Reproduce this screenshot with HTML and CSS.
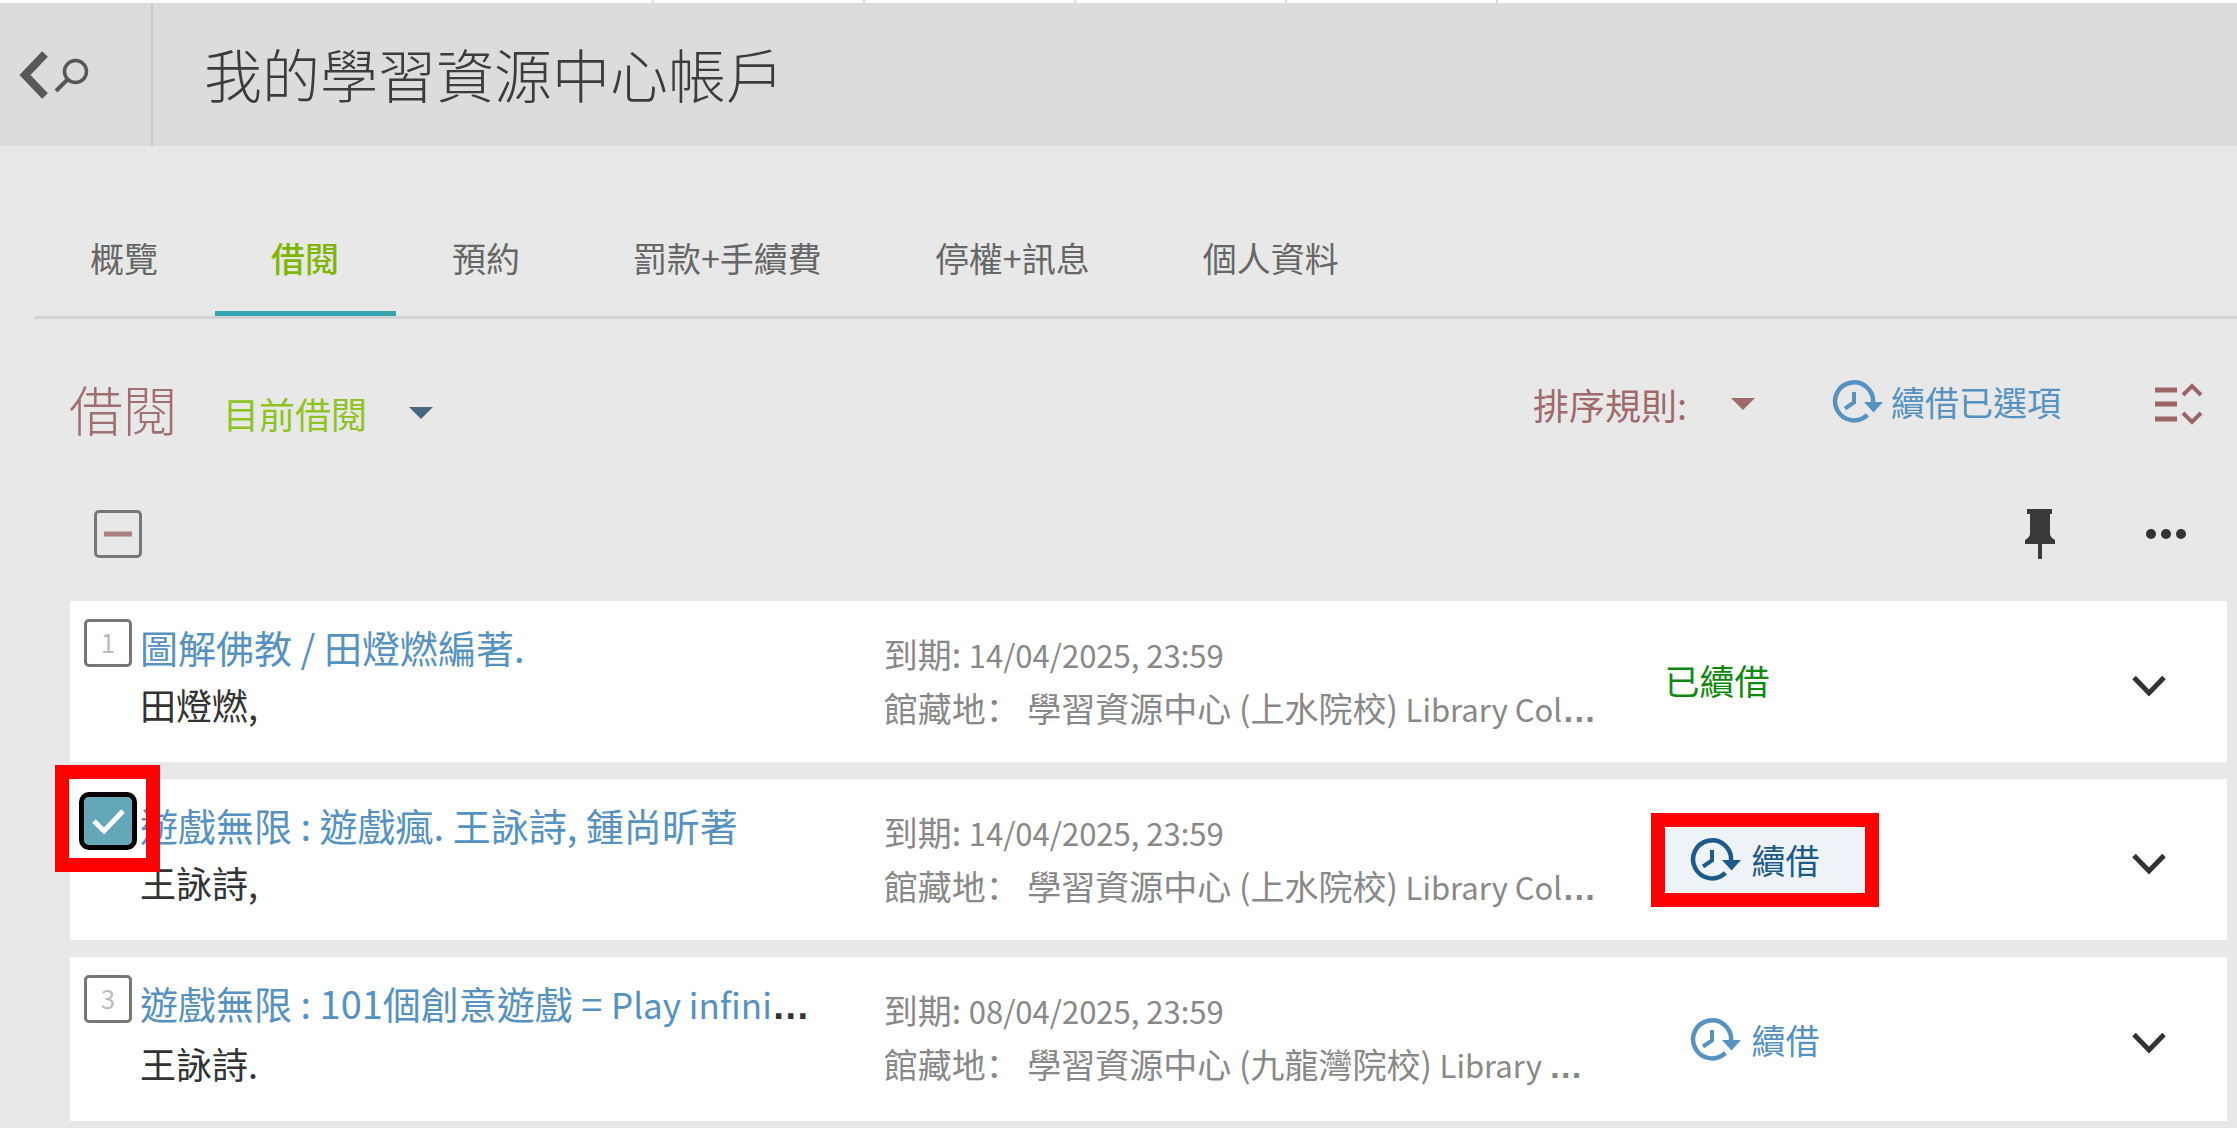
FILE: index.html
```html
<!DOCTYPE html>
<html lang="zh-Hant">
<head>
  <meta charset="utf-8">
  <title>我的學習資源中心帳戶</title>
  <meta name="viewport" content="width=device-width, initial-scale=1">
  <link rel="stylesheet" href="styles.css">
</head>
<body>

  <!-- shared icons -->
  <svg class="defs" width="0" height="0" aria-hidden="true">
    <symbol id="icon-renew" viewBox="0 0 51 43">
      <path d="M35.4 34.9A19 19 0 1 1 41 23" fill="none" stroke="currentColor" stroke-width="4.5"/>
      <path d="M22 12V22.5L13 28.5" fill="none" stroke="currentColor" stroke-width="4"/>
      <path d="M32 22H51L41.5 32.500Z" fill="currentColor"/>
    </symbol>
    <symbol id="icon-down" viewBox="0 0 34 22">
      <path d="M2 2.500L17 18L32 2.500" fill="none" stroke="currentColor" stroke-width="5"/>
    </symbol>
    <symbol id="icon-caret" viewBox="0 0 24 12">
      <path d="M0 0H24L12 12Z" fill="currentColor"/>
    </symbol>
  </svg>

  <div class="strip"></div>
  <header class="header">
    <button class="back" aria-label="返回搜尋">
      <svg width="72" height="50" viewBox="0 0 72 50">
        <path d="M27 4L7 25L27 46" fill="none" stroke="#585858" stroke-width="8"/>
        <circle cx="57.500" cy="21.500" r="11" fill="none" stroke="#585858" stroke-width="3.500"/>
        <path d="M49 30L38 41" fill="none" stroke="#585858" stroke-width="4"/>
      </svg>
    </button>
    <h1>我的學習資源中心帳戶</h1>
  </header>

  <nav class="tabs">
    <a href="#">概覽</a>
    <a href="#" class="active">借閱</a>
    <a href="#">預約</a>
    <a href="#">罰款+手續費</a>
    <a href="#">停權+訊息</a>
    <a href="#">個人資料</a>
  </nav>

  <main>
    <div class="toolbar">
      <div class="filter">
        <h2>借閱</h2>
        <div class="dropdown">
          <select aria-label="借閱類別">
            <option>目前借閱</option>
          </select>
          <svg class="caret"><use href="#icon-caret"/></svg>
        </div>
      </div>
      <div class="sort">
        <label for="sort">排序規則:</label>
        <div class="dropdown">
          <select id="sort"><option></option></select>
          <svg class="caret"><use href="#icon-caret"/></svg>
        </div>
      </div>
      <button class="renew-all">
        <svg class="renew-icon"><use href="#icon-renew"/></svg>
        續借已選項
      </button>
      <button class="expand-all" aria-label="全部展開">
        <svg width="48" height="44" viewBox="0 0 48 44" fill="none" stroke="#9c6464" stroke-width="5">
          <path d="M0 8H22M0 22H22M0 37H22"/>
          <path d="M28 13L37 4L46 13M28 31L37 40L46 31" stroke-width="4"/>
        </svg>
      </button>
    </div>

    <div class="bulk">
      <div class="tick">
        <input type="checkbox" aria-label="全選">
        <svg width="48" height="48"><path d="M10 24H38" stroke="#a97f7f" stroke-width="5"/></svg>
      </div>
      <button class="pin" aria-label="釘選">
        <svg width="30" height="50" viewBox="0 0 30 50" fill="#3a3a3a">
          <path d="M2 0H27V5H25V25Q25 28 30 31V35H0V31Q5 28 5 25V5H2Z"/>
          <path d="M13 35H17V50H13Z"/>
        </svg>
      </button>
      <button class="more" aria-label="更多">
        <svg width="40" height="12" viewBox="0 0 40 12" fill="#333">
          <circle cx="5" cy="6" r="5"/><circle cx="20" cy="6" r="5"/><circle cx="35" cy="6" r="5"/>
        </svg>
      </button>
    </div>

    <div class="loans">
      <div class="loan">
        <div class="tick">
          <input type="checkbox" id="loan1">
          <label for="loan1">1</label>
        </div>
        <div class="book">
          <p class="title"><a href="#">圖解佛教 / 田燈燃編著.</a></p>
          <p class="author">田燈燃,</p>
        </div>
        <div class="info">
          <p>到期: <span class="latin">14/04/2025, 23:59</span></p>
          <p>館藏地<span lang="zh-Hans">：</span> 學習資源中心 (上水院校) <span class="latin">Library Col</span><span class="dots">…</span></p>
        </div>
        <div class="action"><span class="renewed">已續借</span></div>
        <button class="more-info" aria-label="展開"><svg><use href="#icon-down"/></svg></button>
      </div>

      <div class="loan">
        <div class="tick">
          <input type="checkbox" id="loan2" aria-label="2" checked>
          <svg width="48" height="48"><path d="M10 24L20 34L39 14" fill="none" stroke="#fff" stroke-width="5"/></svg>
        </div>
        <div class="book">
          <p class="title"><a href="#">遊戲無限 : 遊戲瘋. 王詠詩, 鍾尚昕著</a></p>
          <p class="author">王詠詩,</p>
        </div>
        <div class="info">
          <p>到期: <span class="latin">14/04/2025, 23:59</span></p>
          <p>館藏地<span lang="zh-Hans">：</span> 學習資源中心 (上水院校) <span class="latin">Library Col</span><span class="dots">…</span></p>
        </div>
        <div class="action">
          <button class="renew marked">
            <svg class="renew-icon"><use href="#icon-renew"/></svg>
            續借
          </button>
        </div>
        <button class="more-info" aria-label="展開"><svg><use href="#icon-down"/></svg></button>
        <div class="mark"></div>
      </div>

      <div class="loan">
        <div class="tick">
          <input type="checkbox" id="loan3">
          <label for="loan3">3</label>
        </div>
        <div class="book">
          <p class="title"><a href="#">遊戲無限 : 101個創意遊戲 = <span class="latin">Play infini</span></a><span class="dots">…</span></p>
          <p class="author">王詠詩.</p>
        </div>
        <div class="info">
          <p>到期: <span class="latin">08/04/2025, 23:59</span></p>
          <p>館藏地<span lang="zh-Hans">：</span> 學習資源中心 (九龍灣院校) <span class="latin">Library </span><span class="dots">…</span></p>
        </div>
        <div class="action">
          <button class="renew">
            <svg class="renew-icon"><use href="#icon-renew"/></svg>
            續借
          </button>
        </div>
        <button class="more-info" aria-label="展開"><svg><use href="#icon-down"/></svg></button>
      </div>
    </div>
  </main>

</body>
</html>
```

FILE: styles.css
```css
* {
  box-sizing: border-box;
}
body {
  margin: 0;
  background-color: #e8e8e8;
  color: #333;
  font-family: "Noto Sans CJK SC", "Noto Sans CJK TC", sans-serif;
  font-size: 34px;
}
h1, h2, p {
  margin: 0;
}
a {
  text-decoration: none;
}
button, select {
  font: inherit;
  color: inherit;
  background: none;
  border: none;
  padding: 0;
  cursor: pointer;
}
svg {
  display: block;
}
.defs {
  position: absolute;
}

/* header */
.strip {
  height: 3px;
  background: repeating-linear-gradient(to right, #ddd 0 2px, #fff 2px 211px) 652px 0 / 848px 100% no-repeat #fff;
}
.header {
  display: flex;
  align-items: center;
  height: 143px;
  background-color: #dcdcdc;
}
.back {
  width: 153px;
  height: 100%;
  padding-left: 18px;
  border-right: 2px solid #c8c8c8;
}
.header h1 {
  padding: 0 0 4px 51px;
  font-size: 58px;
  font-weight: 300;
  color: #3c3c3c;
}

/* tabs */
.tabs {
  display: flex;
  margin: 64px 0 0 34px;
  border-bottom: 3px solid #d4d4d4;
}
.tabs a {
  padding: 0 57px 5px 56px;
  line-height: 96px;
  color: #666;
  border-bottom: 5px solid transparent;
}
.tabs .active {
  color: #80b600;
  font-weight: 500;
  border-color: #35a5b0;
}

/* toolbar */
.toolbar {
  display: flex;
  align-items: center;
  height: 86px;
  margin: 42px 0 4px;
  padding: 0 34px 0 69px;
  color: #a06a6a;
}
.filter {
  display: flex;
  align-items: center;
  gap: 46px;
  margin-right: auto;
  padding-top: 10px;
}
.filter h2 {
  font-size: 54px;
  line-height: 76px;
  font-weight: 300;
  color: #a07070;
}
.dropdown {
  display: grid;
  align-items: center;
}
.dropdown select, .dropdown .caret {
  grid-area: 1 / 1;
}
.dropdown select {
  appearance: none;
  width: 100%;
}
.caret {
  width: 24px;
  height: 12px;
  justify-self: end;
  pointer-events: none;
}
.filter .dropdown {
  width: 210px;
  padding-top: 8px;
  font-size: 36px;
  color: #8fc31f;
}
.filter .caret {
  color: #4a6781;
}
.sort {
  display: flex;
  align-items: center;
  font-size: 36px;
}
.sort .dropdown {
  width: 68px;
}
.renew-all {
  display: flex;
  align-items: center;
  gap: 8px;
  margin: 0 94px 0 77px;
  padding-bottom: 6px;
  color: #5592c2;
}
.renew-icon {
  width: 51px;
  height: 43px;
}

/* select all row */
.bulk {
  display: flex;
  align-items: center;
  padding: 58px 51px 42px 94px;
}
.pin {
  margin-left: auto;
  margin-right: 91px;
}
.tick {
  display: grid;
  width: 48px;
  height: 48px;
}
.tick > * {
  grid-area: 1 / 1;
}
.tick input {
  appearance: none;
  width: 48px;
  height: 48px;
  margin: 0;
  border: 3px solid #777;
  border-radius: 5px;
}
.tick input:checked {
  background-color: #64a7b8;
  border: none;
  outline: 5px solid #000;
}
.tick label {
  font-size: 26px;
  line-height: 46px;
  text-align: center;
  color: #bbb;
}
.tick svg {
  pointer-events: none;
}

/* loans */
.loans {
  display: grid;
  gap: 17px;
  padding: 0 10px 10px 70px;
}
.loan {
  position: relative;
  display: grid;
  grid-template-columns: 56px 743fr 780fr 467fr 33px;
  padding: 0 62px 0 14px;
  background-color: #fff;
}
.loan .tick {
  margin-top: 18px;
}
.book, .info {
  min-width: 0;
  white-space: nowrap;
}
.book {
  padding: 17px 0 30px;
}
.title {
  font-size: 38px;
  line-height: 58px;
}
.title a {
  color: #5592c2;
}
.author {
  font-size: 36px;
  line-height: 56px;
}
.info {
  padding-top: 26px;
  line-height: 53px;
  color: #888;
}
.latin {
  font-size: 31px;
}
.title .latin {
  font-size: 35px;
}
.dots {
  font-family: "Liberation Sans", sans-serif;
  font-weight: bold;
}
.action {
  display: flex;
  align-items: center;
}
.renewed {
  padding-bottom: 4px;
  font-size: 35px;
  color: #0f8a0f;
}
.renew {
  display: flex;
  align-items: center;
  gap: 11px;
  width: 200px;
  height: 66px;
  padding-left: 25px;
  color: #5592c2;
}
.renew.marked {
  color: #1c5a8a;
  background-color: #eef3f8;
  outline: 14px solid #f00;
}
.more-info {
  padding-top: 8px;
}
.more-info svg {
  width: 34px;
  height: 22px;
}

/* red frame over the ticked box */
.mark {
  position: absolute;
  top: -14px;
  left: -15px;
  width: 105px;
  height: 107px;
  border: 14px solid #f00;
  pointer-events: none;
}
```
